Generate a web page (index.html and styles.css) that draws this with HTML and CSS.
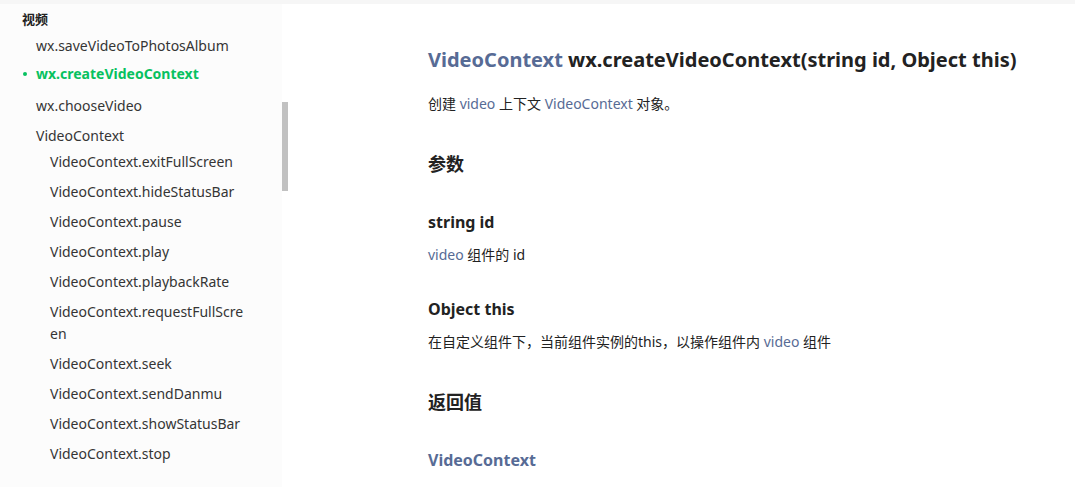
FILE: index.html
```html
<!DOCTYPE html>
<html lang="zh-CN">
<head>
  <meta charset="UTF-8">
  <title>wx.createVideoContext</title>
  <link rel="stylesheet" href="styles.css">
</head>
<body>
  <div class="topbar"></div>
  <div class="page">
    <nav class="sidebar">
      <div class="nav-title">视频</div>
      <ul class="nav-list">
        <li>wx.saveVideoToPhotosAlbum</li>
        <li class="active">wx.createVideoContext</li>
        <li>wx.chooseVideo</li>
        <li>VideoContext
          <ul class="sub-list">
            <li>VideoContext.exitFullScreen</li>
            <li>VideoContext.hideStatusBar</li>
            <li>VideoContext.pause</li>
            <li>VideoContext.play</li>
            <li>VideoContext.playbackRate</li>
            <li>VideoContext.requestFullScreen</li>
            <li>VideoContext.seek</li>
            <li>VideoContext.sendDanmu</li>
            <li>VideoContext.showStatusBar</li>
            <li>VideoContext.stop</li>
          </ul>
        </li>
      </ul>
      <div class="scrollbar"></div>
    </nav>
    <main class="content">
      <h1><a href="#">VideoContext</a> wx.createVideoContext(string id, Object this)</h1>
      <p>创建 <a href="#">video</a> 上下文 <a href="#">VideoContext</a> 对象。</p>
      <h2>参数</h2>
      <h3>string id</h3>
      <p><a href="#">video</a> 组件的 id</p>
      <h3>Object this</h3>
      <p>在自定义组件下，当前组件实例的this，以操作组件内 <a href="#">video</a> 组件</p>
      <h2>返回值</h2>
      <h3 class="ret"><a href="#">VideoContext</a></h3>
    </main>
  </div>
</body>
</html>
```

FILE: styles.css
```css
body {
  margin: 0;
  font-family: "Noto Sans", "Noto Sans CJK SC", sans-serif;
  color: #222;
  background: #fff;
  overflow: hidden;
}
a {
  color: #576b95;
  text-decoration: none;
}
.topbar {
  height: 4px;
  background: #f6f6f6;
}
.page {
  display: flex;
}
.sidebar {
  position: relative;
  width: 282px;
  height: 483px;
  background: #fcfcfc;
  flex-shrink: 0;
  font-size: 14px;
  color: #353535;
}
.nav-title {
  padding: 6px 0 0 22px;
  font-size: 13px;
  font-weight: bold;
  line-height: 18px;
  color: #222;
}
.nav-list, .sub-list {
  list-style: none;
  margin: 0;
  padding: 0;
}
.nav-list > li {
  padding: 4px 0 4px 36px;
  line-height: 22px;
}
.nav-list > li:first-child {
  padding-top: 7px;
}
.nav-list > li.active {
  position: relative;
  color: #07c160;
  font-weight: bold;
  padding-top: 2px;
  padding-bottom: 6px;
}
.nav-list > li.active::before {
  content: '';
  position: absolute;
  left: 23px;
  top: 11px;
  width: 4px;
  height: 4px;
  border-radius: 50%;
  background: #07c160;
}
.sub-list {
  margin-left: -36px;
}
.sub-list li {
  padding: 4px 0 4px 50px;
  width: 198px;
  line-height: 22px;
  word-break: break-all;
}
.scrollbar {
  position: absolute;
  left: 282px;
  top: 98px;
  width: 6px;
  height: 89px;
  background: #c1c1c1;
}
.content {
  padding: 0 0 0 146px;
}
.content h1 {
  margin: 38px 0 0;
  font-size: 20px;
  line-height: 36px;
  color: #222;
}
.content p {
  margin: 0;
  font-size: 14px;
  line-height: 22px;
}
.content h1 + p {
  margin-top: 15px;
}
.content h2 {
  margin: 36px 0 0;
  font-size: 18px;
  line-height: 26px;
}
.content h3 {
  margin: 33px 0 10px;
  font-size: 16px;
  line-height: 24px;
}
.content h3 + p + h3 {
  margin-top: 31px;
}
.content h3.ret {
  margin-top: 33px;
}
```
